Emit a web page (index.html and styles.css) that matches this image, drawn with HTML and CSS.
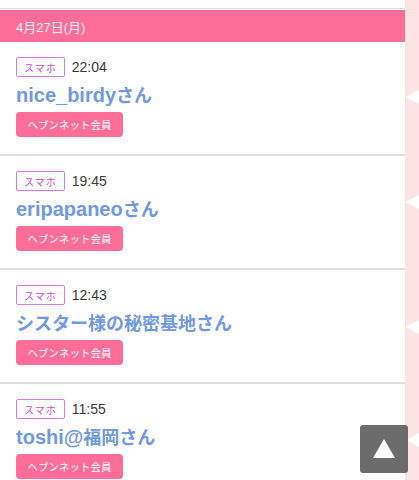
FILE: index.html
```html
<!DOCTYPE html>
<html lang="ja">
<head>
<meta charset="utf-8">
<link rel="stylesheet" href="styles.css">
</head>
<body>
<div class="page">
  <main class="main">
    <div class="date-bar">4月27日(月)</div>
    <ul class="list">
      <li class="item">
        <div class="meta"><span class="device">スマホ</span><span class="time">22:04</span></div>
        <div class="name"><span class="latin">nice_birdy</span>さん</div>
        <span class="member">ヘブンネット会員</span>
      </li>
      <li class="item">
        <div class="meta"><span class="device">スマホ</span><span class="time">19:45</span></div>
        <div class="name"><span class="latin">eripapaneo</span>さん</div>
        <span class="member">ヘブンネット会員</span>
      </li>
      <li class="item">
        <div class="meta"><span class="device">スマホ</span><span class="time">12:43</span></div>
        <div class="name">シスター様の秘密基地さん</div>
        <span class="member">ヘブンネット会員</span>
      </li>
      <li class="item">
        <div class="meta"><span class="device">スマホ</span><span class="time">11:55</span></div>
        <div class="name"><span class="latin">toshi@</span>福岡さん</div>
        <span class="member">ヘブンネット会員</span>
      </li>
    </ul>
  </main>
  <aside class="strip">
    <span class="tri t1"></span>
    <span class="tri t2"></span>
    <span class="tri t3"></span>
    <span class="tri t4"></span>
  </aside>
</div>
<a class="to-top" href="#"><span class="up"></span></a>
</body>
</html>
```
FILE: styles.css
```css
* { box-sizing: border-box; }
html, body { margin: 0; padding: 0; background: #fff; }
body {
  font-family: "Liberation Sans", Arial, "Noto Sans CJK JP", sans-serif;
  overflow: hidden;
  height: 480px;
}
.page {
  display: flex;
  height: 480px;
}
.main {
  width: 405px;
  flex: none;
  padding-top: 8px;
}
.date-bar {
  border-top: 1px solid #e3dcdc;
  box-shadow: inset 0 1px 0 #fff;
  background: #ff6d98;
  color: #fff2f6;
  font-family: "Liberation Sans", Arial, "Noto Sans CJK JP", sans-serif;
  font-size: 13px;
  height: 34px;
  padding: 1px 16px 0;
  display: flex;
  align-items: center;
}
.list { list-style: none; margin: 0; padding: 0; }
.item {
  padding: 15px 16px 17px;
  border-bottom: 2px solid #dedede;
}
.meta { display: flex; align-items: center; height: 20px; }
.device {
  display: inline-flex;
  align-items: center;
  height: 20px;
  padding: 0 7px;
  border: 1px solid #d27ee0;
  border-radius: 2px;
  color: #cc4fc4;
  font-family: "Noto Sans CJK JP", sans-serif;
  font-size: 10px;
  letter-spacing: 1px;
}
.time {
  margin-left: 7px;
  font-size: 14px;
  color: #3a3a3a;
}
.name {
  margin: 4px 0;
  height: 27px;
  line-height: 27px;
  font-family: "Noto Sans CJK JP", sans-serif;
  font-size: 18px;
  font-weight: 600;
  color: #7199e0;
  white-space: nowrap;
}
.latin {
  font-family: "Liberation Sans", Arial, sans-serif;
  font-size: 20px;
  font-weight: bold;
}
.member {
  display: inline-flex;
  align-items: center;
  height: 25px;
  width: 107px;
  justify-content: center;
  background: #ff6d98;
  border-radius: 4px;
  color: #fff;
  font-family: "Noto Sans CJK JP", sans-serif;
  font-size: 10.5px;
}
.strip {
  flex: 1;
  background: #fde3e4;
  display: flex;
  flex-direction: column;
  align-items: flex-end;
}
.tri {
  width: 0; height: 0;
  border-top: 7px solid transparent;
  border-bottom: 7px solid transparent;
  border-right: 13px solid #fff;
}
.t1 { margin-top: 90px; }
.t2 { margin-top: 91px; }
.t3 { margin-top: 111px; }
.t4 { margin-top: 99px; }
.to-top {
  position: absolute;
  left: 360px;
  top: 425px;
  width: 48px;
  height: 48px;
  border-radius: 3px;
  background: rgba(88, 88, 88, 0.88);
  display: flex;
  align-items: center;
  justify-content: center;
}
.up {
  width: 0; height: 0;
  border-left: 11.5px solid transparent;
  border-right: 11.5px solid transparent;
  border-bottom: 19px solid #fff;
  margin-top: -2px;
}
```
